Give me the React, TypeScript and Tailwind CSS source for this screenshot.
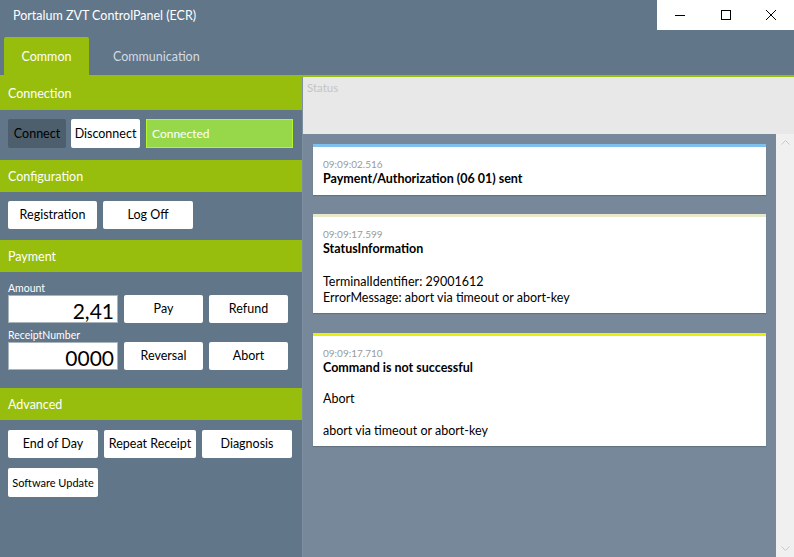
import React from "react";

const font = { fontFamily: 'Lato, "Noto Sans", Arial, sans-serif' };

function Header({ title, className = "h-[32px]" }: { title: string; className?: string }) {
  return (
    <div className={`flex items-center bg-[#97be0d] px-2 pt-[2px] text-[12.5px] text-white ${className}`}>
      {title}
    </div>
  );
}

function Btn({ label, className = "" }: { label: string; className?: string }) {
  return (
    <button
      className={`flex h-[28px] items-center justify-center whitespace-nowrap rounded-[2px] bg-white pt-[1px] text-[12.5px] text-black ${className}`}
    >
      {label}
    </button>
  );
}

function Card({
  color,
  time,
  title,
  children,
}: {
  color: string;
  time: string;
  title: string;
  children?: React.ReactNode;
}) {
  return (
    <div className={`border-t-[3px] ${color} bg-white px-[10px] pb-[7px] pt-[11px] shadow-[0_1px_1px_rgba(0,0,0,0.15)]`}>
      <div className="text-[10px] leading-[12px] text-[#9a9a9a]">{time}</div>
      <div className="text-[12.5px] font-bold leading-[18px] text-black">{title}</div>
      {children}
    </div>
  );
}

export default function App() {
  return (
    <div className="flex h-[557px] w-[794px] flex-col overflow-hidden bg-[#617689]" style={font}>
      {/* title bar */}
      <div className="flex h-[30px] shrink-0 items-center">
        <div className="pl-[13px] pt-[2px] text-[12.5px] text-white">Portalum ZVT ControlPanel (ECR)</div>
        <div className="ml-auto flex h-[30px] w-[137px] items-center bg-white">
          <div className="flex w-[46px] justify-center">
            <svg width="10" height="10" viewBox="0 0 10 10">
              <path d="M0 5.5h10" stroke="#000" strokeWidth="1" />
            </svg>
          </div>
          <div className="flex w-[46px] justify-center">
            <svg width="10" height="10" viewBox="0 0 10 10">
              <rect x="0.5" y="0.5" width="9" height="9" fill="none" stroke="#000" strokeWidth="1" />
            </svg>
          </div>
          <div className="flex w-[46px] justify-center">
            <svg width="10" height="10" viewBox="0 0 10 10">
              <path d="M0 0L10 10M10 0L0 10" stroke="#000" strokeWidth="1" />
            </svg>
          </div>
        </div>
      </div>

      {/* tabs */}
      <div className="flex h-[45px] shrink-0 items-end pl-[4px]">
        <div className="flex h-[38px] w-[85px] items-center justify-center rounded-t-[2px] bg-[#97be0d] pt-[3px] text-[12.5px] text-white">
          Common
        </div>
        <div className="flex h-[38px] items-center px-[24px] pt-[3px] text-[12.5px] text-[#d3dbe1]">Communication</div>
      </div>
      <div className="h-[2px] shrink-0 bg-[#97be0d]" />

      <div className="flex min-h-0 flex-1">
        {/* left panel */}
        <div className="w-[303px] shrink-0 border-r border-[#7d8fa0]">
          <Header title="Connection" className="h-[33px]" />
          <div className="flex gap-[5px] px-[8px] pb-[12px] pt-[9px]">
            <button className="flex h-[29px] w-[58px] items-center justify-center rounded-[2px] bg-[#4d5e6c] pt-[1px] text-[12.5px] text-black">
              Connect
            </button>
            <Btn label="Disconnect" className="h-[29px] w-[69px]" />
            <div className="ml-[1px] flex h-[29px] w-[147px] items-center border border-[#b4f52b] bg-[#97d84a] px-[5px] text-[12px] text-white">
              Connected
            </div>
          </div>

          <Header title="Configuration" />
          <div className="flex gap-[6px] px-[8px] pb-[11px] pt-[9px]">
            <Btn label="Registration" className="w-[89px]" />
            <Btn label="Log Off" className="w-[90px]" />
          </div>

          <Header title="Payment" />
          <div className="px-[8px] pb-[18px] pt-[10px]">
            <div className="text-[10.5px] leading-[13px] text-white">Amount</div>
            <div className="flex gap-[6px]">
              <div className="flex h-[28px] w-[110px] items-center justify-end border border-[#aab4bd] bg-white pr-[3px] pt-[3px] text-[21px] text-black">
                2,41
              </div>
              <Btn label="Pay" className="w-[79px]" />
              <Btn label="Refund" className="w-[79px]" />
            </div>
            <div className="mt-[6px] text-[10.5px] leading-[13px] text-white">ReceiptNumber</div>
            <div className="flex gap-[6px]">
              <div className="flex h-[28px] w-[110px] items-center justify-end border border-[#aab4bd] bg-white pr-[3px] pt-[3px] text-[21px] text-black">
                0000
              </div>
              <Btn label="Reversal" className="w-[79px]" />
              <Btn label="Abort" className="w-[79px]" />
            </div>
          </div>

          <Header title="Advanced" />
          <div className="flex flex-col gap-[10px] px-[8px] pt-[10px]">
            <div className="flex gap-[6px]">
              <Btn label="End of Day" className="w-[90px]" />
              <Btn label="Repeat Receipt" className="w-[92px]" />
              <Btn label="Diagnosis" className="w-[90px]" />
            </div>
            <Btn label="Software Update" className="h-[29px] w-[90px] !text-[11px]" />
          </div>
        </div>

        {/* right panel */}
        <div className="flex min-w-0 flex-1 flex-col">
          <div className="h-[57px] shrink-0 bg-[#e8e8e8] px-[4px] pt-[2px] text-[11.5px] text-[#c4c4c4]">Status</div>
          <div className="flex min-h-0 flex-1">
            <div className="flex flex-1 flex-col gap-[19px] bg-[#768899] pl-[10px] pr-[10px] pt-[10px]">
              <Card color="border-[#7fc1ec]" time="09:09:02.516" title="Payment/Authorization (06 01) sent" />
              <Card color="border-[#e6e9cc]" time="09:09:17.599" title="StatusInformation">
                <div className="mt-[16px] text-[12.5px] leading-[16px] text-black">TerminalIdentifier: 29001612</div>
                <div className="text-[12.5px] leading-[16px] text-black">ErrorMessage: abort via timeout or abort-key</div>
              </Card>
              <div className="mt-[1px]">
                <Card color="border-[#e8ef0c]" time="09:09:17.710" title="Command is not successful">
                  <div className="mt-[14px] text-[12.5px] leading-[16px] text-black">Abort</div>
                  <div className="mt-[16px] text-[12.5px] leading-[16px] text-black">abort via timeout or abort-key</div>
                </Card>
              </div>
            </div>
            <div className="flex w-[18px] shrink-0 flex-col items-center justify-between bg-[#f0f0f0] py-[6px]">
              <svg width="9" height="5" viewBox="0 0 9 5">
                <path d="M0.5 4.5L4.5 0.5L8.5 4.5" fill="none" stroke="#c8c8c8" strokeWidth="1" />
              </svg>
              <svg width="9" height="5" viewBox="0 0 9 5">
                <path d="M0.5 0.5L4.5 4.5L8.5 0.5" fill="none" stroke="#c8c8c8" strokeWidth="1" />
              </svg>
            </div>
          </div>
        </div>
      </div>
    </div>
  );
}
